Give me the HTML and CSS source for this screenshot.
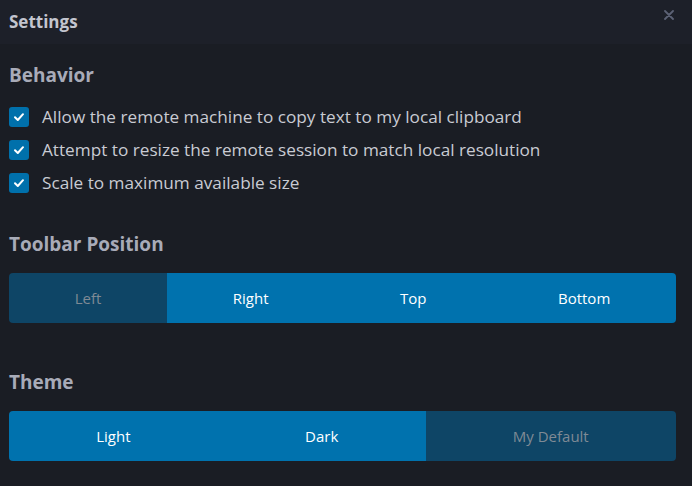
FILE: index.html
```html
<!DOCTYPE html>
<html>
<head>
<meta charset="utf-8">
<link rel="stylesheet" href="styles.css">
</head>
<body>
<div class="dialog">
  <header class="header">
    <h1 class="title">Settings</h1>
    <span class="close" aria-label="Close">
      <svg width="10" height="10" viewBox="0 0 10 10"><path d="M1 1L9 9M9 1L1 9" stroke="#5c6275" stroke-width="1.8" stroke-linecap="round"/></svg>
    </span>
  </header>
  <main class="content">
    <section class="section">
      <h2 class="heading">Behavior</h2>
      <ul class="options">
        <li class="option"><span class="check"><svg width="12" height="10" viewBox="0 0 12 10"><path d="M2 5.2L4.8 8L10 2.2" fill="none" stroke="#fff" stroke-width="2" stroke-linecap="round" stroke-linejoin="round"/></svg></span>Allow the remote machine to copy text to my local clipboard</li>
        <li class="option"><span class="check"><svg width="12" height="10" viewBox="0 0 12 10"><path d="M2 5.2L4.8 8L10 2.2" fill="none" stroke="#fff" stroke-width="2" stroke-linecap="round" stroke-linejoin="round"/></svg></span>Attempt to resize the remote session to match local resolution</li>
        <li class="option"><span class="check"><svg width="12" height="10" viewBox="0 0 12 10"><path d="M2 5.2L4.8 8L10 2.2" fill="none" stroke="#fff" stroke-width="2" stroke-linecap="round" stroke-linejoin="round"/></svg></span>Scale to maximum available size</li>
      </ul>
    </section>
    <section class="section section-toolbar">
      <h2 class="heading">Toolbar Position</h2>
      <div class="segmented">
        <button class="seg seg-off">Left</button>
        <button class="seg">Right</button>
        <button class="seg">Top</button>
        <button class="seg">Bottom</button>
      </div>
    </section>
    <section class="section section-theme">
      <h2 class="heading">Theme</h2>
      <div class="segmented">
        <button class="seg">Light</button>
        <button class="seg">Dark</button>
        <button class="seg seg-off">My Default</button>
      </div>
    </section>
  </main>
</div>
</body>
</html>
```
FILE: styles.css
```css
html, body {
  margin: 0;
  padding: 0;
  background: #1a1d24;
}
body {
  font-family: "Open Sans", "Noto Sans", sans-serif;
  color: #c9cbd3;
  width: 692px;
  height: 486px;
  overflow: hidden;
}
.dialog {
  display: flex;
  flex-direction: column;
}
.header {
  height: 44px;
  background: #1d2029;
  display: flex;
  align-items: center;
  justify-content: space-between;
  padding: 0 18px 0 9px;
}
.title {
  margin: 0;
  font-size: 17px;
  font-weight: 700;
  color: #c3c5cf;
  margin-top: -2px;
}
.close {
  display: flex;
  margin-top: -14px;
}
.content {
  padding: 0 16px 0 9px;
}
.section {
  display: flex;
  flex-direction: column;
}
.heading {
  margin: 0;
  font-size: 19px;
  font-weight: 700;
  color: #a8abb8;
  line-height: 24px;
}
.section:first-child .heading {
  margin-top: 19px;
}
.options {
  list-style: none;
  margin: 20px 0 0;
  padding: 0;
  display: flex;
  flex-direction: column;
  gap: 13px;
}
.option {
  display: flex;
  align-items: center;
  gap: 13px;
  font-size: 17.2px;
  line-height: 20px;
  color: #c9cbd3;
}
.check {
  width: 20px;
  height: 20px;
  border-radius: 3px;
  background: #0070ab;
  display: flex;
  align-items: center;
  justify-content: center;
  flex: none;
}
.section-toolbar .heading {
  margin-top: 39px;
}
.section-theme .heading {
  margin-top: 47px;
}
.segmented {
  margin-top: 17px;
  display: flex;
  height: 50px;
  border-radius: 4px;
  overflow: hidden;
}
.seg {
  flex: 1 1 auto;
  border: 0;
  padding: 0;
  margin: 0;
  background: #0072ae;
  color: #ffffff;
  font-family: inherit;
  font-size: 15px;
}
.seg-off {
  background: #0e4566;
  color: #7f8a95;
}
```
